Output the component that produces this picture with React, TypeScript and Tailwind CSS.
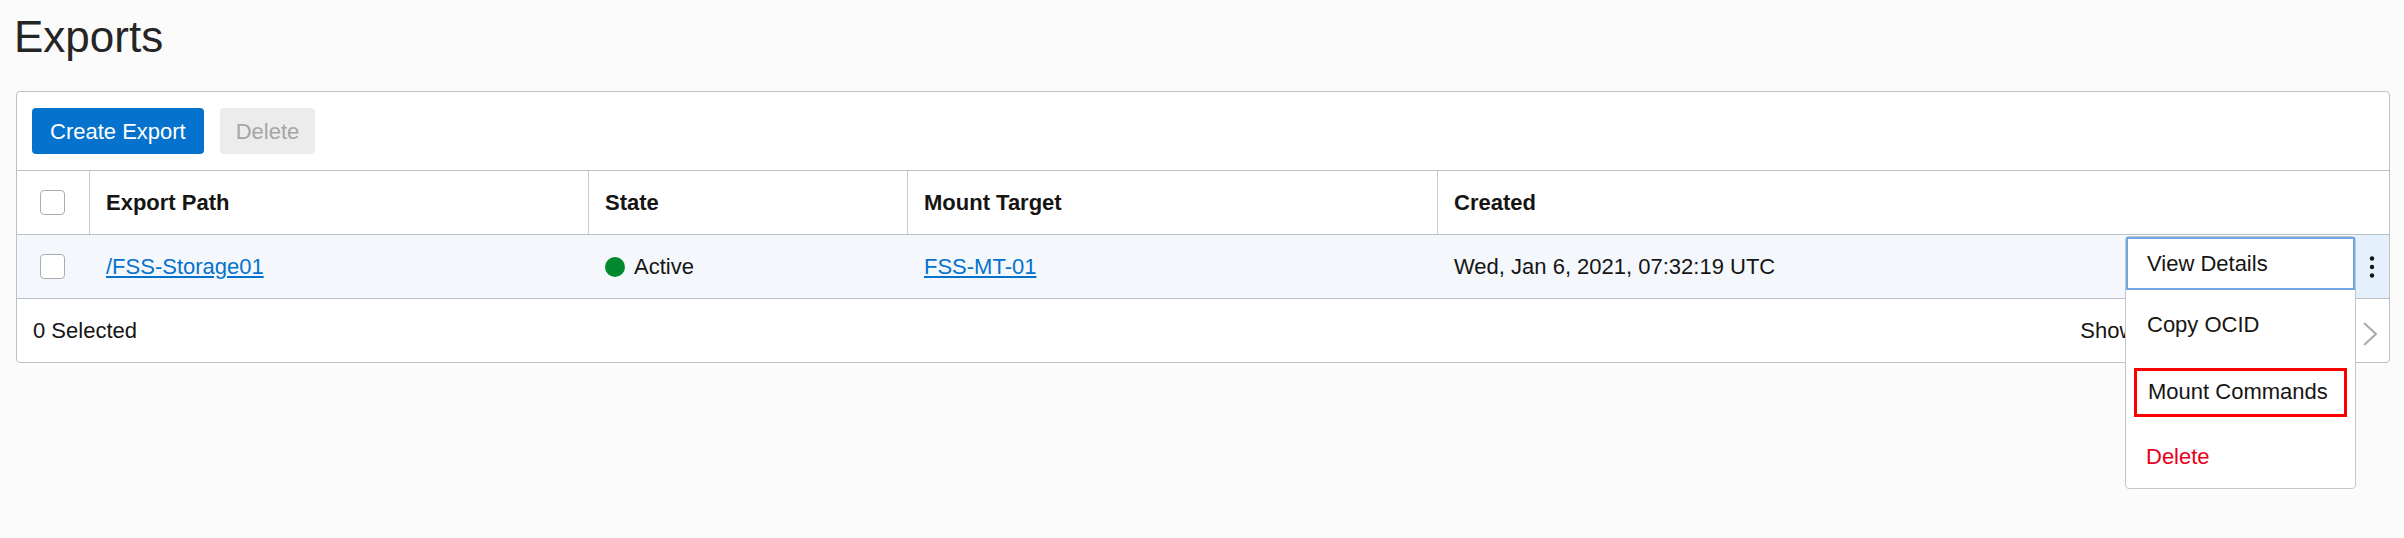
import React from 'react';

// Column template shared by header and data rows
const COLS = 'grid grid-cols-[72px_499px_319px_530px_1fr_34px]';

interface ExportRow {
  path: string;
  state: string;
  mountTarget: string;
  created: string;
}

const rows: ExportRow[] = [
  {
    path: '/FSS-Storage01',
    state: 'Active',
    mountTarget: 'FSS-MT-01',
    created: 'Wed, Jan 6, 2021, 07:32:19 UTC',
  },
];

function Checkbox() {
  return (
    <span className="block w-[25px] h-[25px] rounded-[4px] border border-[#a9acb0] bg-white" />
  );
}

function Kebab() {
  return (
    <svg width="6" height="24" viewBox="0 0 6 24" fill="#161513">
      <circle cx="3" cy="3.5" r="2.2" />
      <circle cx="3" cy="12" r="2.2" />
      <circle cx="3" cy="20.5" r="2.2" />
    </svg>
  );
}

function Chevron({ left = false }: { left?: boolean }) {
  return (
    <svg width="14" height="24" viewBox="0 0 14 24" fill="none" stroke="#a9a9a9" strokeWidth="2">
      <polyline points={left ? '13,1 1,12 13,23' : '1,1 13,12 1,23'} />
    </svg>
  );
}

function ActionMenu() {
  return (
    <div className="absolute z-10 top-[1px] left-[-230px] w-[231px] bg-white border border-[#c3c7cc] rounded-[4px] text-[22px] text-[#161513]">
      <div className="h-[53px] flex items-center pl-[19px] border-2 border-[#70a6e4]">View Details</div>
      <div className="h-[68px] flex items-center pl-[21px]">Copy OCID</div>
      <div className="h-[66px] pt-[10px]">
        <div className="mx-[8px] h-[49px] border-[3px] border-[#ff0000] flex items-center pl-[11px] pb-[3px]">
          Mount Commands
        </div>
      </div>
      <div className="h-[64px] flex items-center pl-[20px] text-[#e7001b]">Delete</div>
    </div>
  );
}

export default function App() {
  return (
    <div
      className="min-h-screen w-full bg-[#fbfbfb] text-[#161513]"
      style={{ fontFamily: '"Liberation Sans", Arial, sans-serif' }}
    >
      <h1 className="pt-[15px] pl-[14px] text-[44px] leading-none font-normal text-[#252525]">Exports</h1>

      <div className="mt-[32px] ml-4 mr-[14px] bg-white border border-[#bcc1c7] rounded-[4px] text-[22px]">
        {/* toolbar */}
        <div className="flex items-center gap-4 py-4 pl-[15px] border-b border-[#bcc1c7]">
          <button className="h-[46px] px-[18px] rounded-[4px] bg-[#0572ce] text-white">Create Export</button>
          <button className="h-[46px] px-4 rounded-[4px] bg-[#ececec] text-[#a6a6a6]">Delete</button>
        </div>

        {/* header */}
        <div className={`${COLS} h-[64px] border-b border-[#bcc1c7] font-bold`}>
          <div className="flex items-center pl-[23px]">
            <Checkbox />
          </div>
          <div className="flex items-center pl-4 border-l border-[#c8ccd0]">Export Path</div>
          <div className="flex items-center pl-4 border-l border-[#c8ccd0]">State</div>
          <div className="flex items-center pl-4 border-l border-[#c8ccd0]">Mount Target</div>
          <div className="flex items-center pl-4 border-l border-[#c8ccd0]">Created</div>
          <div />
        </div>

        {/* rows */}
        {rows.map((r) => (
          <div key={r.path} className={`${COLS} h-[64px] border-b border-[#bcc1c7] bg-[#f4f8fc]`}>
            <div className="flex items-center pl-[23px]">
              <Checkbox />
            </div>
            <div className="flex items-center pl-4 border-l border-transparent">
              <a href="#" className="text-[#0572ce] underline underline-offset-2">{r.path}</a>
            </div>
            <div className="flex items-center gap-[9px] pl-4 border-l border-transparent">
              <span className="w-[20px] h-[20px] rounded-full bg-[#008a2d]" />
              {r.state}
            </div>
            <div className="flex items-center pl-4 border-l border-transparent">
              <a href="#" className="text-[#0572ce] underline underline-offset-2">{r.mountTarget}</a>
            </div>
            <div className="flex items-center pl-4 border-l border-transparent">{r.created}</div>
            <div className="relative flex items-center justify-center bg-[#e4f1fc]">
              <Kebab />
              <ActionMenu />
            </div>
          </div>
        ))}

        {/* footer (paging text sits under the open menu, as in the console) */}
        <div className="h-[63px] flex items-center justify-between pl-4 pr-[12px]">
          <span>0 Selected</span>
          <div className="flex items-center">
            <span className="mr-[69px]">Showing 1 Item</span>
            <span className="mt-[6px] mr-[48px]"><Chevron left /></span>
            <span className="mt-[6px]"><Chevron /></span>
          </div>
        </div>
      </div>
    </div>
  );
}
